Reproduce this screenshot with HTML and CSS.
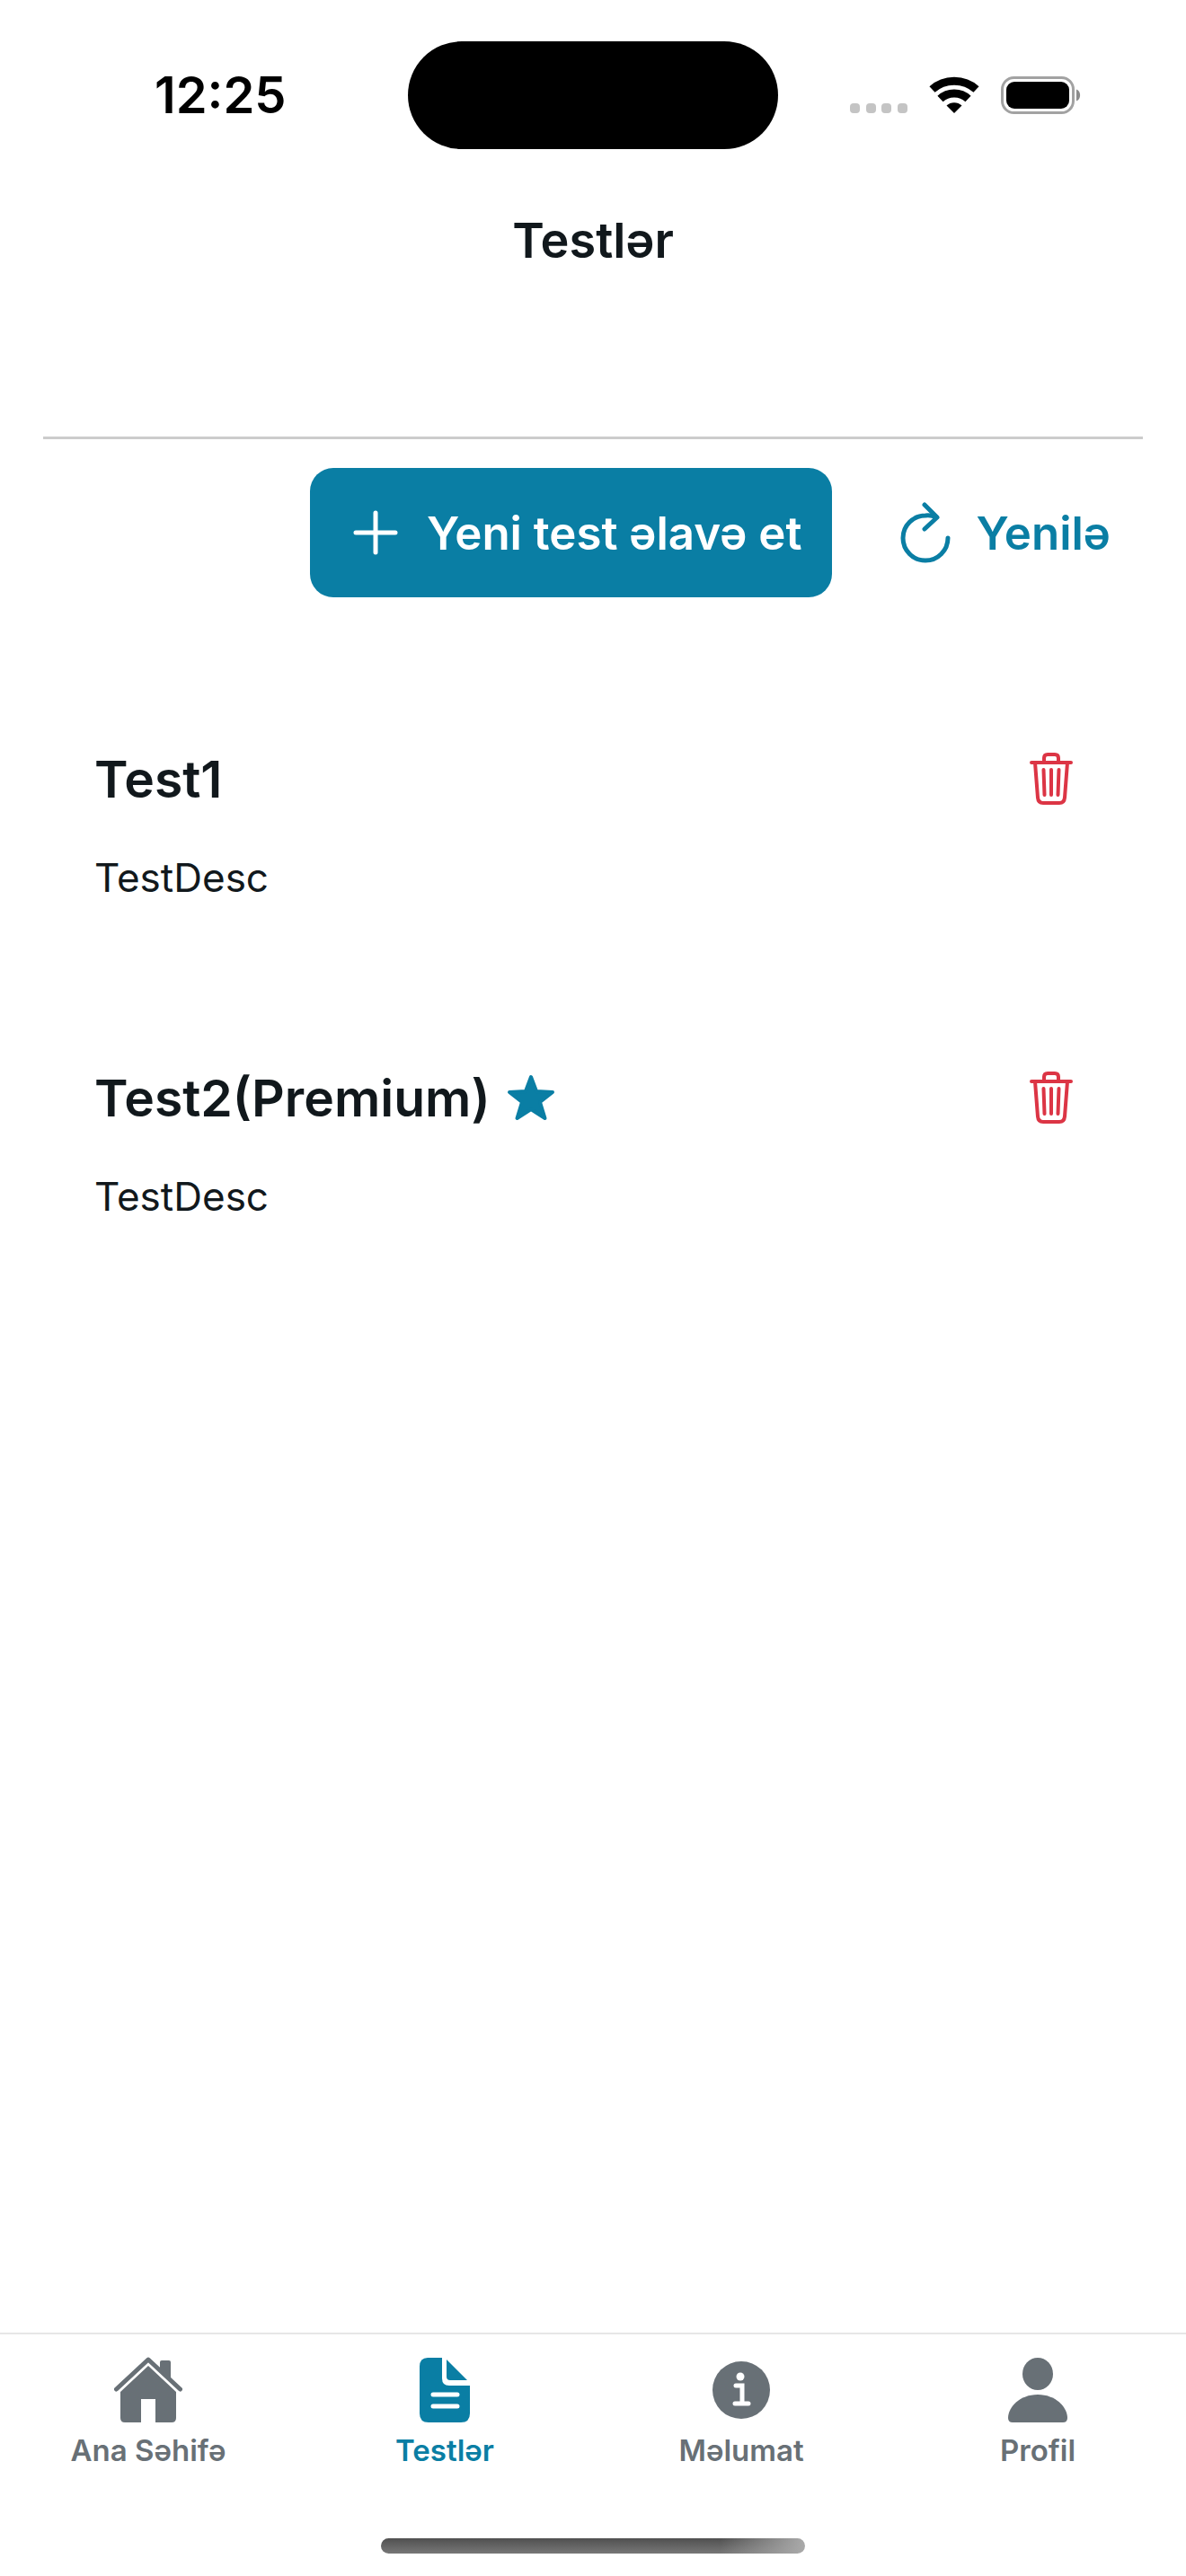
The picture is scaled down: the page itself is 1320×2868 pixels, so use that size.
FILE: index.html
```html
<!DOCTYPE html>
<html lang="az">
<head>
  <meta charset="UTF-8">
  <meta name="viewport" content="width=device-width, initial-scale=1.0">
  <title>Testlər</title>
  <link rel="stylesheet" href="styles.css">
</head>
<body>
  <div class="status-bar">
    <span class="status-time">12:25</span>
    <div class="island"></div>
    <div class="status-icons">
      <svg class="icon-signal" width="64" height="42" viewBox="0 0 64 42" fill="#c4c4c4">
        <rect x="0" y="30" width="11" height="11" rx="4"/>
        <rect x="18" y="30" width="11" height="11" rx="4"/>
        <rect x="35" y="30" width="11" height="11" rx="4"/>
        <rect x="53" y="30" width="11" height="11" rx="4"/>
      </svg>
      <svg class="icon-wifi" width="56" height="42" viewBox="0 0 56 42" fill="none" stroke="#000" stroke-width="9">
        <path d="M3.500 14.500C17 2 39 2 52.500 14.500"/>
        <path d="M12.500 25C21 17 35 17 43.500 25"/>
        <path d="M28 41L19.500 32.500C24 28 32 28 36.500 32.500Z" fill="#000" stroke="none"/>
      </svg>
      <svg class="icon-battery" width="90" height="42" viewBox="0 0 90 42">
        <rect x="1.500" y="1.500" width="79" height="39" rx="13" fill="none" stroke="#a2a2a2" stroke-width="3"/>
        <rect x="6" y="6" width="70" height="30" rx="9" fill="#000"/>
        <path d="M84 14.500C89.500 16 89.500 26 84 27.500Z" fill="#8c8c8c"/>
      </svg>
    </div>
  </div>

  <header class="header">
    <h1>Testlər</h1>
  </header>

  <main class="content">
    <div class="actions">
      <button type="button" class="btn btn-primary">
        <svg width="50" height="50" viewBox="0 0 50 50" fill="none" stroke="currentColor" stroke-width="5" stroke-linecap="round">
          <path d="M25 3V47M3 25H47"/>
        </svg>
        Yeni test əlavə et
      </button>
      <button type="button" class="btn btn-link">
        <svg width="56" height="68" viewBox="0 0 56 68" fill="none" stroke="currentColor" stroke-width="5" stroke-linecap="round" stroke-linejoin="round">
          <path d="M53 40A25 25 0 1 1 28 15C32 14.500 36 15 40 17"/>
          <path d="M27 3L41 17L27 30"/>
        </svg>
        Yenilə
      </button>
    </div>

    <ul class="test-list">
      <li class="test-item">
        <div class="test-title">
          <h2>Test1</h2>
          <button type="button" class="btn-delete" aria-label="Sil">
            <svg width="48" height="60" viewBox="0 0 48 60" fill="none" stroke="currentColor" stroke-width="4" stroke-linecap="round" stroke-linejoin="round">
              <path d="M2 12H46M16 12V7Q16 3 20 3H28Q32 3 32 7V12"/>
              <path d="M6 12L9 51Q9.500 57 15 57H33Q38.500 57 39 51L42 12"/>
              <path d="M15.500 20L16.500 48M24 20V48M32.500 20L31.500 48"/>
            </svg>
          </button>
        </div>
        <p>TestDesc</p>
      </li>
      <li class="test-item">
        <div class="test-title">
          <h2>Test2(Premium)</h2>
          <svg class="star" width="54" height="52" viewBox="0 0 54 52" fill="currentColor" stroke="currentColor" stroke-width="4" stroke-linejoin="round">
            <path d="M27 3L33 19L51 20L37 31L42.500 49L27 39L11.500 49L17 31L3 20L21 19Z"/>
          </svg>
          <button type="button" class="btn-delete" aria-label="Sil">
            <svg width="48" height="60" viewBox="0 0 48 60" fill="none" stroke="currentColor" stroke-width="4" stroke-linecap="round" stroke-linejoin="round">
              <path d="M2 12H46M16 12V7Q16 3 20 3H28Q32 3 32 7V12"/>
              <path d="M6 12L9 51Q9.500 57 15 57H33Q38.500 57 39 51L42 12"/>
              <path d="M15.500 20L16.500 48M24 20V48M32.500 20L31.500 48"/>
            </svg>
          </button>
        </div>
        <p>TestDesc</p>
      </li>
    </ul>
  </main>

  <nav class="tab-bar">
    <a href="#" class="tab">
      <svg width="76" height="74" viewBox="0 0 76 74" fill="currentColor">
        <path d="M2.500 36L38 3L73.500 36" fill="none" stroke="currentColor" stroke-width="5" stroke-linecap="round" stroke-linejoin="round"/>
        <path d="M51 6Q51 4 53 4H61Q63 4 63 6V26L51 15Z"/>
        <path d="M38 10L69 39V68Q69 73 64 73H46V47H30V73H12Q7 73 7 68V39Z"/>
      </svg>
      <span>Ana Səhifə</span>
    </a>
    <a href="#" class="tab active">
      <svg width="58" height="74" viewBox="0 0 58 74" fill="currentColor">
        <path d="M10 1H26V24Q26 32 34 32H57V63Q57 73 47 73H11Q1 73 1 63V11Q1 1 10 1Z"/>
        <path d="M31 3L54 26H35Q31 26 31 22Z"/>
        <path d="M16 42H43M16 55H43" stroke="#fff" stroke-width="5" stroke-linecap="round"/>
      </svg>
      <span>Testlər</span>
    </a>
    <a href="#" class="tab">
      <svg width="64" height="74" viewBox="0 0 64 74" fill="currentColor">
        <circle cx="32" cy="37" r="32"/>
        <circle cx="31" cy="22" r="4.500" fill="#fff"/>
        <path d="M26 32H33V52M25 52H40" fill="none" stroke="#fff" stroke-width="5" stroke-linecap="round"/>
      </svg>
      <span>Məlumat</span>
    </a>
    <a href="#" class="tab">
      <svg width="66" height="74" viewBox="0 0 66 74" fill="currentColor">
        <ellipse cx="33" cy="19" rx="17" ry="18"/>
        <path d="M33 42C53 42 66 56 66 68Q66 73 61 73H5Q0 73 0 68C0 56 13 42 33 42Z"/>
      </svg>
      <span>Profil</span>
    </a>
  </nav>
  <div class="home-indicator"></div>
</body>
</html>
```
FILE: styles.css
```css
* {
  box-sizing: border-box;
  margin: 0;
  padding: 0;
}

body {
  font-family: Inter, "Liberation Sans", sans-serif;
  display: flex;
  flex-direction: column;
  min-height: 100vh;
  background-color: #fff;
  color: #11181c;
}

button {
  font: inherit;
  border: none;
  background: none;
  cursor: pointer;
}

svg {
  display: block;
  flex-shrink: 0;
}

/* status bar */
.status-bar {
  display: grid;
  grid-template-columns: 1fr 412px 1fr;
  align-items: center;
  padding-top: 46px;
}

.status-time {
  padding-left: 172px;
  font-size: 56px;
  font-weight: 600;
  color: #000;
}

.island {
  height: 120px;
  border-radius: 60px;
  background-color: #000;
}

.status-icons {
  display: flex;
  justify-content: flex-end;
  gap: 24px;
  padding-right: 116px;
}

/* header */
.header {
  padding: 70px 48px 0;
  height: 320px;
  text-align: center;
}

.header h1 {
  font-size: 54px;
  line-height: 64px;
  font-weight: 600;
}

/* content */
.content {
  flex: 1;
  margin: 0 48px;
  border-top: 3px solid #ccc;
}

.actions {
  display: flex;
  justify-content: flex-end;
  align-items: center;
  gap: 76px;
  padding: 32px 36px 0 0;
}

.btn {
  display: flex;
  align-items: center;
  gap: 28px;
  height: 144px;
  font-size: 51px;
  font-weight: 600;
}

.btn-primary {
  gap: 32px;
  padding: 0 34px 0 48px;
  border-radius: 26px;
  background-color: #0a7ea4;
  color: #fff;
}

.btn-link {
  color: #0a7ea4;
}

.test-list {
  list-style: none;
  padding: 164px 78px 0 57px;
}

.test-item {
  height: 355px;
}

.test-title {
  display: flex;
  align-items: center;
  gap: 18px;
  height: 76px;
  margin-bottom: 44px;
}

.test-title h2 {
  font-size: 57px;
  font-weight: 600;
}

.test-item p {
  font-size: 44px;
  line-height: 56px;
}

.star {
  color: #0a7ea4;
}

.btn-delete {
  margin-left: auto;
  color: #dc3545;
}

/* bottom tabs */
.tab-bar {
  display: grid;
  grid-template-columns: repeat(4, 1fr);
  padding-top: 25px;
  border-top: 2px solid #e6e6e6;
}

.tab {
  display: flex;
  flex-direction: column;
  align-items: center;
  gap: 10px;
  font-size: 33px;
  line-height: 40px;
  font-weight: 600;
  color: #687076;
  text-decoration: none;
}

.tab.active {
  color: #0a7ea4;
}

.home-indicator {
  width: 472px;
  height: 17px;
  margin: 78px auto 25px;
  border-radius: 9px;
  background: linear-gradient(to right, transparent 80%, #aaa), linear-gradient(#505050, #777);
}
```
